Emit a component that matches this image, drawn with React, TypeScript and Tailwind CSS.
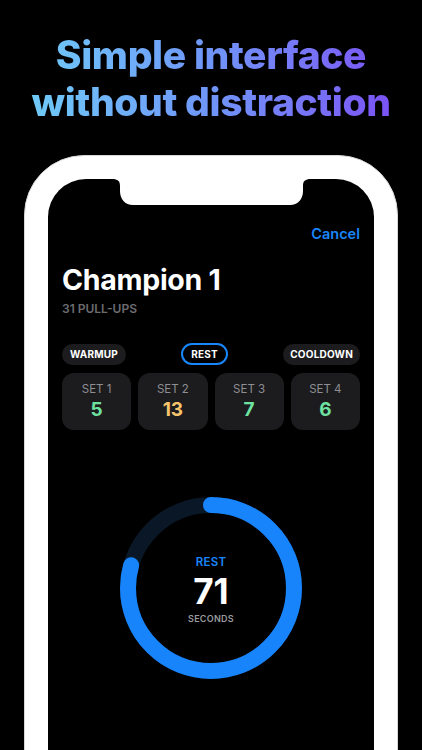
const sets = [
  { label: "SET 1", value: "5", color: "text-[#6ee2a0]" },
  { label: "SET 2", value: "13", color: "text-[#f7c46c]" },
  { label: "SET 3", value: "7", color: "text-[#6ee2a0]" },
  { label: "SET 4", value: "6", color: "text-[#6ee2a0]" },
];

const R = 83;
const C = 2 * Math.PI * R;
const progress = 0.793;

function Notch() {
  return (
    <svg
      className="absolute left-[64px] top-0"
      width="199"
      height="26"
      viewBox="0 0 199 26"
    >
      <path
        d="M0 0 H199 C193 0 191 2 191 7 V12 C191 20 186 26 178 26 H21 C13 26 8 20 8 12 V7 C8 2 6 0 0 0 Z"
        fill="#fff"
      />
    </svg>
  );
}

function Ring() {
  return (
    <div className="relative mx-auto h-[184px] w-[184px]">
      <svg width="184" height="184" viewBox="0 0 184 184" className="-rotate-90">
        <circle cx="92" cy="92" r={R} fill="none" stroke="#0a1726" strokeWidth="16" />
        <circle
          cx="92"
          cy="92"
          r={R}
          fill="none"
          stroke="#1884fb"
          strokeWidth="16"
          strokeLinecap="round"
          strokeDasharray={`${C * progress} ${C}`}
        />
      </svg>
      <div className="absolute inset-0 flex flex-col items-center justify-center pt-[4px]">
        <span className="text-[11.5px] font-semibold leading-[14px] tracking-[0.02em] text-[#1a86fb]">
          REST
        </span>
        <span className="mt-[3px] text-[35px] font-bold leading-[38px] text-white">71</span>
        <span className="mt-[3px] text-[9px] font-semibold leading-[12px] tracking-[0.03em] text-[#9a9a9e]">
          SECONDS
        </span>
      </div>
    </div>
  );
}

export default function App() {
  return (
    <div
      className="h-[750px] w-[422px] overflow-hidden bg-black"
      style={{ fontFamily: "Inter, 'Noto Sans', sans-serif" }}
    >
      <h1 className="pt-[31px] text-center text-[39px] font-extrabold leading-[47px] tracking-[-0.01em]">
        <span className="inline-block bg-gradient-to-r from-[#6fcaf8] via-[#6f95f8] to-[#7a52f5] bg-clip-text text-transparent">
          Simple interface
          <br />
          without distraction
        </span>
      </h1>

      <div className="mx-[24px] mt-[30px] h-[620px] rounded-t-[60px] border border-[#d8d8d8] bg-white px-[23px] pt-[23px]">
        <div className="relative h-full rounded-t-[38px] bg-black px-[14px] pt-[46px]">
          <Notch />
          <div className="flex justify-end">
            <span className="text-[14.5px] font-semibold leading-[18px] text-[#1a86fb]">Cancel</span>
          </div>
          <div className="mt-[21px] text-[28.5px] font-bold leading-[32px] tracking-[-0.01em] text-white">
            Champion 1
          </div>
          <div className="mt-[5px] text-[12px] font-semibold leading-[16px] text-[#6c6c70]">
            31 PULL-UPS
          </div>

          <div className="mt-[26px] flex items-center justify-between">
            <span className="flex h-[21px] items-center rounded-full bg-[#1c1c1e] px-[8px] text-[10px] font-bold tracking-[0.02em] text-white">
              WARMUP
            </span>
            <span className="flex h-[22px] items-center rounded-full border-2 border-[#1a86fb] bg-black px-[8px] text-[10px] font-bold tracking-[0.02em] text-white">
              REST
            </span>
            <span className="flex h-[21px] items-center rounded-full bg-[#1c1c1e] px-[7px] text-[10px] font-bold tracking-[0.02em] text-white">
              COOLDOWN
            </span>
          </div>

          <div className="mt-[8px] grid grid-cols-4 gap-[7px]">
            {sets.map((s) => (
              <div
                key={s.label}
                className="flex h-[57px] flex-col items-center justify-center rounded-[12px] bg-[#1c1c1e]"
              >
                <span className="text-[11.5px] leading-[14px] text-[#8e8e93]">{s.label}</span>
                <span className={`mt-[3px] text-[19px] font-bold leading-[22px] ${s.color}`}>
                  {s.value}
                </span>
              </div>
            ))}
          </div>

          <div className="mt-[66px]">
            <Ring />
          </div>
        </div>
      </div>
    </div>
  );
}
